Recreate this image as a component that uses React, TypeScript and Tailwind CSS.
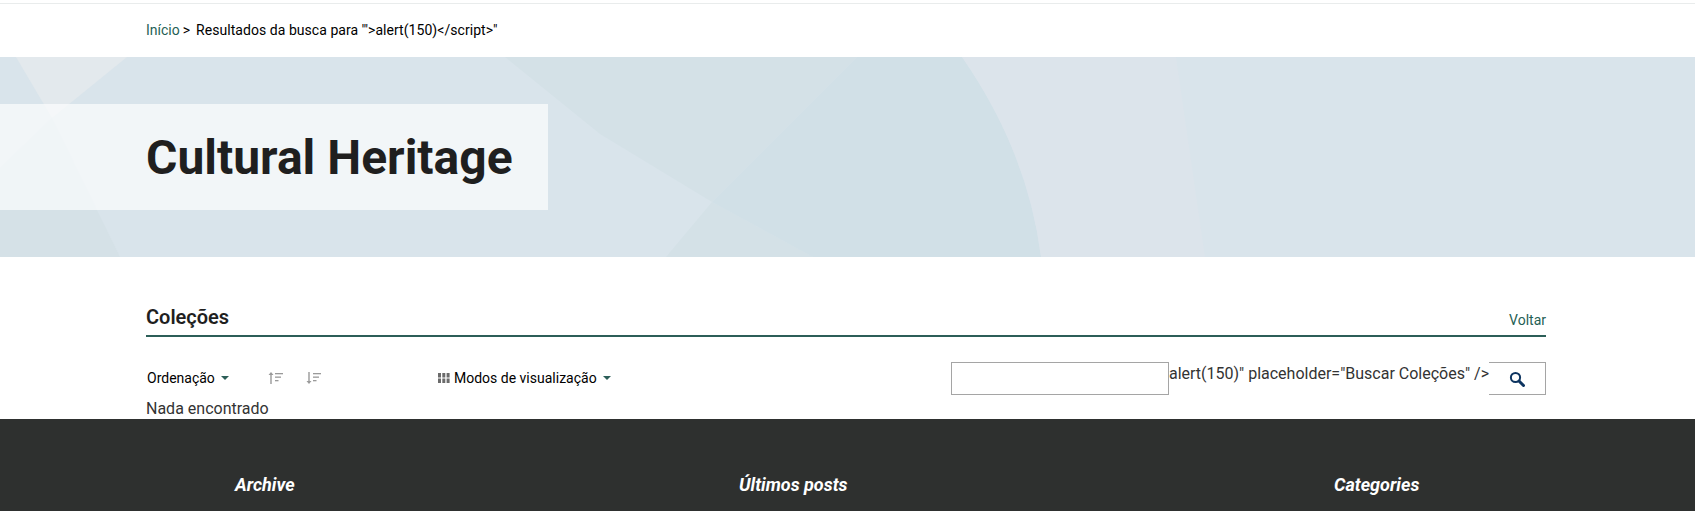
function BannerArt() {
  return (
    <svg className="absolute inset-0 h-full w-full" viewBox="0 0 1695 200" preserveAspectRatio="none">
      <polygon points="16,0 127,0 52,61" fill="#e3e9ed" />
      <polygon points="52,61 120,200 0,200 0,111" fill="#d5e1e7" />
      <polygon points="505,0 857,0 712,145 600,77" fill="#d4e1e7" />
      <polygon points="712,145 813,200 666,200" fill="#d4e1e7" />
      <path d="M857 0 L962 0 Q1028 95 1041 200 L813 200 L712 145 Z" fill="#d1e0e7" />
      <path d="M962 0 L1176 0 L1205 200 L1041 200 Q1028 95 962 0 Z" fill="#dce4eb" />
    </svg>
  );
}

function Caret() {
  return <span className="ml-1.5 inline-block border-x-[4px] border-t-[4px] border-x-transparent border-t-[#2c5e58]" />;
}

function SortIcon({ up }: { up?: boolean }) {
  return (
    <svg width="16" height="14" viewBox="0 0 16 14" className="text-[#9a9a9a]" fill="currentColor">
      {up ? <path d="M3 1 L5.5 4 H3.7 V13 H2.3 V4 H.5 Z" /> : <path d="M3 13 L5.5 10 H3.7 V1 H2.3 V10 H.5 Z" />}
      <rect x="7" y="2" width="8" height="1.3" />
      <rect x="7" y="5.5" width="6" height="1.3" />
      <rect x="7" y="9" width="3.5" height="1.3" />
    </svg>
  );
}

function GridIcon() {
  return (
    <svg width="12" height="12" viewBox="0 0 12 12" fill="#6b6b6b" className="mr-1">
      <rect x="0" y="1" width="3" height="4.5" />
      <rect x="4.3" y="1" width="3" height="4.5" />
      <rect x="8.6" y="1" width="3" height="4.5" />
      <rect x="0" y="6.5" width="3" height="4.5" />
      <rect x="4.3" y="6.5" width="3" height="4.5" />
      <rect x="8.6" y="6.5" width="3" height="4.5" />
    </svg>
  );
}

function SearchIcon() {
  return (
    <svg width="16" height="16" viewBox="0 0 16 16" fill="none" stroke="#0d3460">
      <circle cx="6.5" cy="6.5" r="4.6" strokeWidth="2" />
      <path d="M10 10 L14.5 14.5" strokeWidth="3" strokeLinecap="round" />
    </svg>
  );
}

export default function App() {
  return (
    <div className="h-[511px] overflow-hidden bg-white font-['Roboto',sans-serif] text-[#1f1f1f]">
      <div className="h-[4px] border-b border-[#e9ecec]" />

      <nav className="flex h-[53px] items-center pb-[2px] pl-[146px] text-sm text-black">
        <a className="text-[#1f5f55]">Início</a>
        <span className="ml-[3px]">&gt;</span>
        <span className="ml-[6px] tracking-[0.05px]">Resultados da busca para '"&gt;alert(150)&lt;/script&gt;"</span>
      </nav>

      <header className="relative flex h-[200px] items-center bg-[#d9e4eb]">
        <BannerArt />
        <div className="relative flex h-[106px] w-[548px] items-center bg-white/65 pl-[146px] pt-[2px]">
          <h1 className="text-[48px] font-bold leading-none">Cultural Heritage</h1>
        </div>
      </header>

      <main className="h-[162px] pl-[146px] pr-[149px]">
        <div className="flex h-[80px] items-end">
          <div className="flex h-[36px] w-full items-center justify-between border-b-2 border-[#2c5e58] pb-[2px]">
            <h2 className="text-xl font-semibold">Coleções</h2>
            <a className="pt-[6px] text-sm text-[#1f5f55]">Voltar</a>
          </div>
        </div>

        <div className="mt-[25px] flex h-[33px] items-center pb-[2px] text-sm text-black">
          <div className="flex w-[122px] items-center pl-px">
            Ordenação
            <Caret />
          </div>
          <div className="flex w-[170px] gap-[22px]">
            <SortIcon up />
            <SortIcon />
          </div>
          <div className="flex items-center">
            <GridIcon />
            Modos de visualização
            <Caret />
          </div>
          <div className="ml-auto flex items-start self-start">
            <input className="h-[33px] w-[218px] border border-[#a5a5a5] bg-white" />
            <span className="text-base leading-6 text-[#333]">alert(150)" placeholder="Buscar Coleções" /&gt;</span>
            <button className="flex h-[33px] w-[57px] items-center justify-center border border-l-0 border-[#a5a5a5]">
              <SearchIcon />
            </button>
          </div>
        </div>

        <p className="mt-[2px] text-base text-[#333]">Nada encontrado</p>
      </main>

      <footer className="relative h-[92px] bg-[#2e302f] text-lg font-bold italic leading-6 text-white">
        <h3 className="absolute left-[235px] top-[54px]">Archive</h3>
        <h3 className="absolute left-[739px] top-[54px]">Últimos posts</h3>
        <h3 className="absolute left-[1334px] top-[54px]">Categories</h3>
      </footer>
    </div>
  );
}
